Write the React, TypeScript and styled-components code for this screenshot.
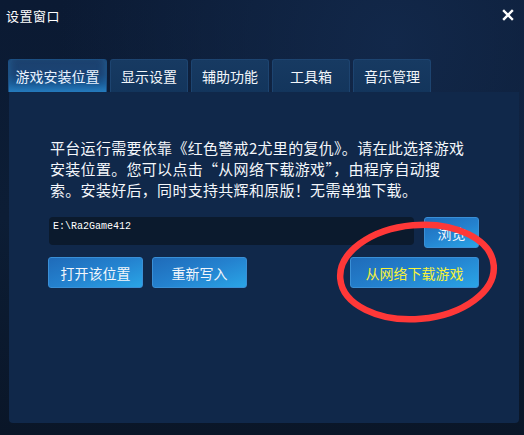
import styled, { createGlobalStyle } from "styled-components";

const GlobalStyle = createGlobalStyle`
  html, body {
    margin: 0;
    padding: 0;
    background: #0a182b;
  }
  * {
    box-sizing: border-box;
  }
`;

const Window = styled.div`
  position: relative;
  width: 524px;
  height: 435px;
  overflow: hidden;
  display: flex;
  flex-direction: column;
  font-family: "Noto Sans CJK SC", "Noto Sans", sans-serif;
  color: #fff;
  background:
    radial-gradient(ellipse at 75% 10%, #12284a 0%, rgba(18, 40, 74, 0) 60%),
    linear-gradient(180deg, #0b1a33 0%, #0c1d35 50%, #0a1628 100%);
`;

const TitleBar = styled.div`
  height: 30px;
  display: flex;
  align-items: center;
  justify-content: space-between;
  padding: 0 10px 0 6px;
  font-size: 13px;
  letter-spacing: 0.5px;
`;

const CloseButton = styled.div`
  width: 12px;
  height: 12px;
  display: flex;
  cursor: pointer;
`;

const TabRow = styled.div`
  display: flex;
  gap: 3px;
  margin-top: 29px;
  padding-left: 8px;
  height: 33px;
`;

const Tab = styled.div<{ $active?: boolean; $width: number }>`
  position: relative;
  width: ${({ $width }) => $width}px;
  height: 33px;
  display: flex;
  align-items: center;
  justify-content: center;
  font-size: 14px;
  color: ${({ $active }) => ($active ? "#e8f2ff" : "#f2f6fb")};
  border-radius: 3px 3px 0 0;
  background: ${({ $active }) =>
    $active
      ? "linear-gradient(180deg, #1c416e 0%, #1a4374 45%, #16528c 75%, #1d6aaa 100%)"
      : "linear-gradient(180deg, #173a62 0%, #13355c 100%)"};
  border: 1px solid ${({ $active }) => ($active ? "#1c4f82" : "#1d4470")};
  border-bottom: none;
  box-shadow: ${({ $active }) =>
    $active ? "inset 0 -6px 10px rgba(60, 170, 240, 0.3)" : "none"};
`;

const Panel = styled.div`
  margin: 0 5px 0 9px;
  height: 331px;
  background: #10284a;
  border-radius: 0 0 4px 4px;
  padding: 45px 40px 0 41px;
  display: flex;
  flex-direction: column;
`;

const Intro = styled.p`
  margin: 0;
  font-size: 15px;
  line-height: 21px;
  letter-spacing: 0.3px;
  color: #f4f7fb;
  white-space: nowrap;
`;

const PathRow = styled.div`
  display: flex;
  align-items: flex-start;
  gap: 10px;
  margin-top: 17px;
  margin-left: -1px;
`;

const PathField = styled.div`
  width: 365px;
  height: 28px;
  background: #0b1a2d;
  border-radius: 4px;
  padding: 3px 4px;
  font-family: "Liberation Mono", "DejaVu Sans Mono", monospace;
  font-size: 10px;
  line-height: 14px;
  color: #fff;
`;

const Button = styled.div<{ $width: number; $highlight?: boolean }>`
  width: ${({ $width }) => $width}px;
  height: 31px;
  display: flex;
  align-items: center;
  justify-content: center;
  font-size: 14px;
  color: ${({ $highlight }) => ($highlight ? "#f6f23a" : "#f2f6fb")};
  border-radius: 3px;
  border: 1px solid #3a8fd6;
  background: linear-gradient(160deg, #1f6bb9 0%, #2482cf 50%, #2aa5e6 100%);
  cursor: pointer;
`;

const ActionRow = styled.div`
  display: flex;
  align-items: center;
  gap: 9px;
  margin-top: 9px;
  margin-left: -2px;
`;

const Spacer = styled.div`
  flex: 1;
`;

const Annotation = styled.svg`
  position: absolute;
  left: 0;
  top: 0;
  width: 524px;
  height: 435px;
  pointer-events: none;
`;

const tabs = [
  { label: "游戏安装位置", width: 99 },
  { label: "显示设置", width: 78 },
  { label: "辅助功能", width: 78 },
  { label: "工具箱", width: 78 },
  { label: "音乐管理", width: 78 },
];

export default function App() {
  return (
    <Window>
      <GlobalStyle />
      <TitleBar>
        <span>设置窗口</span>
        <CloseButton>
          <svg width="12" height="12" viewBox="0 0 12 12">
            <path d="M2 2 L10 10 M10 2 L2 10" stroke="#fff" strokeWidth="2.4" strokeLinecap="square" />
          </svg>
        </CloseButton>
      </TitleBar>
      <TabRow>
        {tabs.map((t, i) => (
          <Tab key={t.label} $active={i === 0} $width={t.width}>
            {t.label}
          </Tab>
        ))}
      </TabRow>
      <Panel>
        <Intro>
          平台运行需要依靠《红色警戒2尤里的复仇》。请在此选择游戏
          <br />
          安装位置。您可以点击“从网络下载游戏”，由程序自动搜
          <br />
          索。安装好后，同时支持共辉和原版！无需单独下载。
        </Intro>
        <PathRow>
          <PathField>E:\Ra2Game412</PathField>
          <Button $width={55}>浏览</Button>
        </PathRow>
        <ActionRow>
          <Button $width={95}>打开该位置</Button>
          <Button $width={95}>重新写入</Button>
          <Spacer />
          <Button $width={129} $highlight>
            从网络下载游戏
          </Button>
        </ActionRow>
      </Panel>
      <Annotation viewBox="0 0 524 435">
        <ellipse
          cx="417"
          cy="272"
          rx="77"
          ry="47"
          transform="rotate(-5 417 272)"
          fill="none"
          stroke="#ff3838"
          strokeWidth="6.5"
        />
      </Annotation>
    </Window>
  );
}
